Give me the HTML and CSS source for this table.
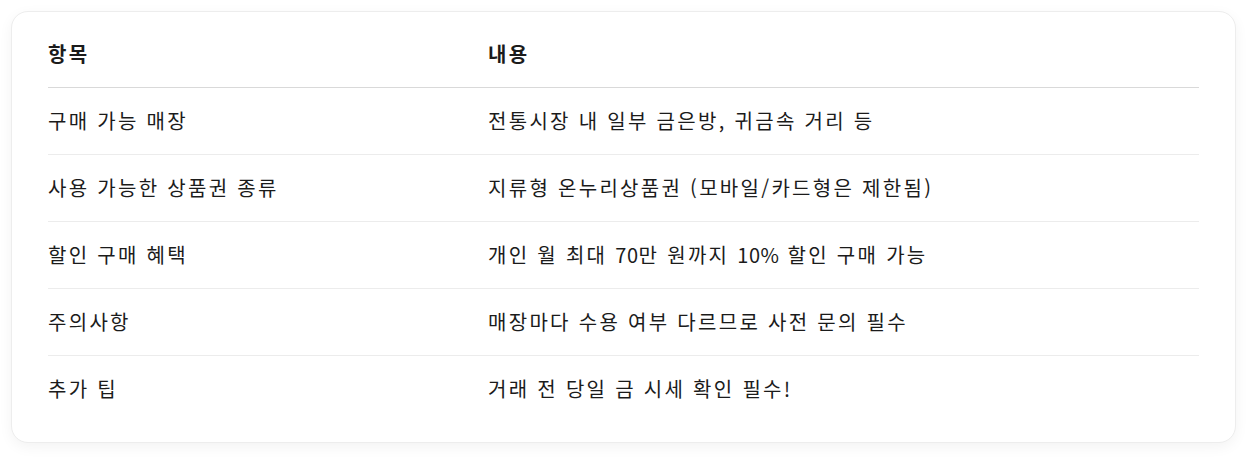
FILE: index.html
```html
<!DOCTYPE html>
<html lang="ko">
<head>
<meta charset="utf-8">
<link rel="stylesheet" href="styles.css">
</head>
<body>
<div class="card">
  <div class="table">
    <div class="row head">
      <div class="cell">항목</div>
      <div class="cell">내용</div>
    </div>
    <div class="row">
      <div class="cell">구매 가능 매장</div>
      <div class="cell">전통시장 내 일부 금은방, 귀금속 거리 등</div>
    </div>
    <div class="row">
      <div class="cell">사용 가능한 상품권 종류</div>
      <div class="cell">지류형 온누리상품권 (모바일/카드형은 제한됨)</div>
    </div>
    <div class="row">
      <div class="cell">할인 구매 혜택</div>
      <div class="cell">개인 월 최대 <span class="num">70</span>만 원까지 <span class="num">10%</span> 할인 구매 가능</div>
    </div>
    <div class="row">
      <div class="cell">주의사항</div>
      <div class="cell">매장마다 수용 여부 다르므로 사전 문의 필수</div>
    </div>
    <div class="row last">
      <div class="cell">추가 팁</div>
      <div class="cell">거래 전 당일 금 시세 확인 필수!</div>
    </div>
  </div>
</div>
</body>
</html>
```

FILE: styles.css
```css
html, body {
  margin: 0;
  padding: 0;
  background: #ffffff;
}
body {
  padding: 11px 12px 16px 11px;
  font-family: "Noto Sans CJK KR", "Noto Sans", sans-serif;
  color: #1b1b1b;
}
.card {
  background: #ffffff;
  border: 1px solid #ededed;
  border-radius: 17px;
  box-shadow: 0 4px 14px rgba(0, 0, 0, 0.05);
  padding: 9px 36px 20px 36px;
}
.table {
  display: flex;
  flex-direction: column;
}
.row {
  display: grid;
  grid-template-columns: 440px 1fr;
  border-bottom: 1px solid #ececec;
}
.row.head {
  border-bottom: 1px solid #d9d9d9;
  font-weight: 700;
}
.row.last {
  border-bottom: none;
}
.cell {
  font-size: 20px;
  letter-spacing: 2.3px;
  line-height: 26px;
  padding: 20px 0;
}
.num {
  letter-spacing: 0.6px;
}
```
